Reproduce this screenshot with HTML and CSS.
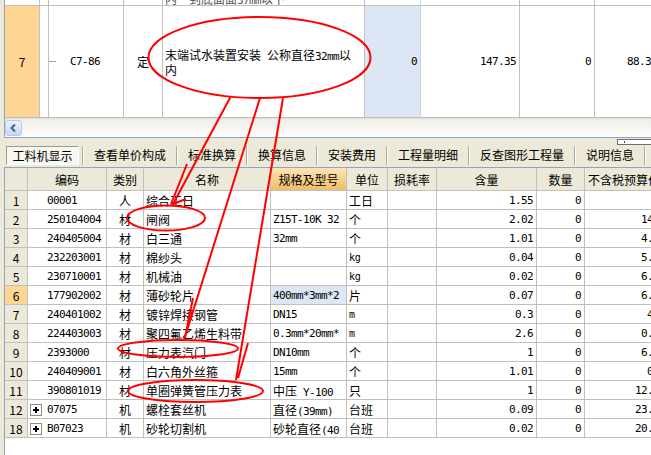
FILE: index.html
```html
<!DOCTYPE html>
<html lang="zh">
<head>
<meta charset="utf-8">
<title>工料机显示</title>
<link rel="stylesheet" href="styles.css">
</head>
<body>
<section class="upper">
  <div class="urow partial">
    <div class="uc"></div>
    <div class="uc"></div>
    <div class="uc"></div>
    <div class="uc"></div>
    <div class="uc name-cut"><span class="cut">内一到底面面<span class="n">37mm</span>以下</span></div>
    <div class="uc blue-edge"></div>
    <div class="uc"></div>
    <div class="uc"></div>
    <div class="uc"></div>
  </div>
  <div class="urow main">
    <div class="uc rh">7</div>
    <div class="uc"></div>
    <div class="uc code"><span class="tree"></span><span class="n">C7-86</span></div>
    <div class="uc c">定</div>
    <div class="uc uname"><span class="wrap">末端试水装置安装<span class="n">&nbsp;</span>公称直径<span class="n">32mm</span>以<br>内</span></div>
    <div class="uc r blue"><span class="n">0</span></div>
    <div class="uc r"><span class="n">147.35</span></div>
    <div class="uc r"><span class="n">0</span></div>
    <div class="uc r"><span class="n">88.35</span></div>
  </div>
  <div class="hscroll">
    <span class="sbtn"><svg width="15" height="14" viewBox="0 0 15 14"><path d="M9 3.5 L5.5 7 L9 10.5" fill="none" stroke="#4D6185" stroke-width="2"/></svg></span>
  </div>
</section>

<nav class="tabs">
  <span class="tab on">工料机显示</span>
  <span class="sep"></span>
  <span class="tab">查看单价构成</span>
  <span class="sep"></span>
  <span class="tab">标准换算</span>
  <span class="sep"></span>
  <span class="tab">换算信息</span>
  <span class="sep"></span>
  <span class="tab">安装费用</span>
  <span class="sep"></span>
  <span class="tab">工程量明细</span>
  <span class="sep"></span>
  <span class="tab">反查图形工程量</span>
  <span class="sep"></span>
  <span class="tab">说明信息</span>
  <span class="sep"></span>
  <span class="mini"><span class="dot"></span></span>
</nav>

<section class="lower">
  <div class="lrow head">
    <div class="lc"></div>
    <div class="lc c">编码</div>
    <div class="lc c">类别</div>
    <div class="lc c">名称</div>
    <div class="lc c hot">规格及型号</div>
    <div class="lc c">单位</div>
    <div class="lc c">损耗率</div>
    <div class="lc c">含量</div>
    <div class="lc c">数量</div>
    <div class="lc last-head">不含税预算价</div>
  </div>

  <div class="lrow">
    <div class="lc c rn">1</div>
    <div class="lc code"><span class="n">00001</span></div>
    <div class="lc c">人</div>
    <div class="lc">综合工日</div>
    <div class="lc"></div>
    <div class="lc">工日</div>
    <div class="lc"></div>
    <div class="lc r"><span class="n">1.55</span></div>
    <div class="lc r"><span class="n">0</span></div>
    <div class="lc r"></div>
  </div>
  <div class="lrow">
    <div class="lc c rn">2</div>
    <div class="lc code"><span class="n">250104004</span></div>
    <div class="lc c">材</div>
    <div class="lc">闸阀</div>
    <div class="lc"><span class="n">Z15T-10K 32</span></div>
    <div class="lc">个</div>
    <div class="lc"></div>
    <div class="lc r"><span class="n">2.02</span></div>
    <div class="lc r"><span class="n">0</span></div>
    <div class="lc r"><span class="n">14.6</span></div>
  </div>
  <div class="lrow">
    <div class="lc c rn">3</div>
    <div class="lc code"><span class="n">240405004</span></div>
    <div class="lc c">材</div>
    <div class="lc">白三通</div>
    <div class="lc"><span class="n">32mm</span></div>
    <div class="lc">个</div>
    <div class="lc"></div>
    <div class="lc r"><span class="n">1.01</span></div>
    <div class="lc r"><span class="n">0</span></div>
    <div class="lc r"><span class="n">4.51</span></div>
  </div>
  <div class="lrow">
    <div class="lc c rn">4</div>
    <div class="lc code"><span class="n">232203001</span></div>
    <div class="lc c">材</div>
    <div class="lc">棉纱头</div>
    <div class="lc"></div>
    <div class="lc"><span class="n unit">kg</span></div>
    <div class="lc"></div>
    <div class="lc r"><span class="n">0.04</span></div>
    <div class="lc r"><span class="n">0</span></div>
    <div class="lc r"><span class="n">5.24</span></div>
  </div>
  <div class="lrow">
    <div class="lc c rn">5</div>
    <div class="lc code"><span class="n">230710001</span></div>
    <div class="lc c">材</div>
    <div class="lc">机械油</div>
    <div class="lc"></div>
    <div class="lc"><span class="n unit">kg</span></div>
    <div class="lc"></div>
    <div class="lc r"><span class="n">0.02</span></div>
    <div class="lc r"><span class="n">0</span></div>
    <div class="lc r"><span class="n">6.83</span></div>
  </div>
  <div class="lrow">
    <div class="lc c rn sel">6</div>
    <div class="lc code"><span class="n">177902002</span></div>
    <div class="lc c">材</div>
    <div class="lc">薄砂轮片</div>
    <div class="lc blue"><span class="n">400mm*3mm*2</span></div>
    <div class="lc">片</div>
    <div class="lc"></div>
    <div class="lc r"><span class="n">0.07</span></div>
    <div class="lc r"><span class="n">0</span></div>
    <div class="lc r"><span class="n">6.40</span></div>
  </div>
  <div class="lrow">
    <div class="lc c rn">7</div>
    <div class="lc code"><span class="n">240401002</span></div>
    <div class="lc c">材</div>
    <div class="lc">镀锌焊接钢管</div>
    <div class="lc"><span class="n">DN15</span></div>
    <div class="lc"><span class="n unit">m</span></div>
    <div class="lc"></div>
    <div class="lc r"><span class="n">0.3</span></div>
    <div class="lc r"><span class="n">0</span></div>
    <div class="lc r"><span class="n">4.5</span></div>
  </div>
  <div class="lrow">
    <div class="lc c rn">8</div>
    <div class="lc code"><span class="n">224403003</span></div>
    <div class="lc c">材</div>
    <div class="lc">聚四氟乙烯生料带</div>
    <div class="lc"><span class="n">0.3mm*20mm*</span></div>
    <div class="lc"><span class="n unit">m</span></div>
    <div class="lc"></div>
    <div class="lc r"><span class="n">2.6</span></div>
    <div class="lc r"><span class="n">0</span></div>
    <div class="lc r"><span class="n">0.42</span></div>
  </div>
  <div class="lrow">
    <div class="lc c rn">9</div>
    <div class="lc code"><span class="n">2393000</span></div>
    <div class="lc c">材</div>
    <div class="lc">压力表汽门</div>
    <div class="lc"><span class="n">DN10mm</span></div>
    <div class="lc">个</div>
    <div class="lc"></div>
    <div class="lc r"><span class="n">1</span></div>
    <div class="lc r"><span class="n">0</span></div>
    <div class="lc r"><span class="n">6.80</span></div>
  </div>
  <div class="lrow">
    <div class="lc c rn">10</div>
    <div class="lc code"><span class="n">240409001</span></div>
    <div class="lc c">材</div>
    <div class="lc">白六角外丝箍</div>
    <div class="lc"><span class="n">15mm</span></div>
    <div class="lc">个</div>
    <div class="lc"></div>
    <div class="lc r"><span class="n">1.01</span></div>
    <div class="lc r"><span class="n">0</span></div>
    <div class="lc r"><span class="n">0.8</span></div>
  </div>
  <div class="lrow">
    <div class="lc c rn">11</div>
    <div class="lc code"><span class="n">390801019</span></div>
    <div class="lc c">材</div>
    <div class="lc">单圈弹簧管压力表</div>
    <div class="lc"><span>中压<span class="n">&nbsp;Y-100</span></span></div>
    <div class="lc">只</div>
    <div class="lc"></div>
    <div class="lc r"><span class="n">1</span></div>
    <div class="lc r"><span class="n">0</span></div>
    <div class="lc r"><span class="n">12.50</span></div>
  </div>
  <div class="lrow">
    <div class="lc c rn">12</div>
    <div class="lc code tree-code"><span class="plus"></span><span class="n">07075</span></div>
    <div class="lc c">机</div>
    <div class="lc">螺栓套丝机</div>
    <div class="lc"><span>直径<span class="n">(39mm)</span></span></div>
    <div class="lc">台班</div>
    <div class="lc"></div>
    <div class="lc r"><span class="n">0.09</span></div>
    <div class="lc r"><span class="n">0</span></div>
    <div class="lc r"><span class="n">23.11</span></div>
  </div>
  <div class="lrow">
    <div class="lc c rn">18</div>
    <div class="lc code tree-code"><span class="plus"></span><span class="n">B07023</span></div>
    <div class="lc c">机</div>
    <div class="lc">砂轮切割机</div>
    <div class="lc"><span>砂轮直径<span class="n">(40</span></span></div>
    <div class="lc">台班</div>
    <div class="lc"></div>
    <div class="lc r"><span class="n">0.02</span></div>
    <div class="lc r"><span class="n">0</span></div>
    <div class="lc r"><span class="n">20.86</span></div>
  </div>
</section>

<svg class="notes" width="651" height="455" viewBox="0 0 651 455">
  <g fill="none" stroke="#FF0000" stroke-width="2">
    <ellipse cx="259.5" cy="57.5" rx="111" ry="40.5"/>
    <ellipse cx="166" cy="218" rx="39" ry="12.5"/>
    <ellipse cx="178" cy="348.5" rx="60" ry="8.5"/>
    <ellipse cx="195.5" cy="391" rx="67.5" ry="11"/>
    <path d="M231 96 L172 206 M187 164 L171 204 M173 204 L186 199"/>
    <path d="M260 98 L184 340 M193 298 L185 338"/>
    <path d="M283 98 L236 380 M248 343 L238 378"/>
  </g>
</svg>
</body>
</html>
```

FILE: styles.css
```css
* { box-sizing: border-box; }
html, body { margin: 0; padding: 0; }
body {
  width: 651px;
  height: 455px;
  overflow: hidden;
  position: relative;
  background: #ECE9D8;
  font-family: "Noto Sans CJK SC", "Noto Sans", sans-serif;
  font-size: 12px;
  color: #000;
}
.n {
  font-family: "DejaVu Sans Mono", "Noto Sans CJK SC", monospace;
  font-size: 11px;
  letter-spacing: -0.62px;
}
.unit { font-size: 10px; letter-spacing: -0.2px; }

/* upper pane */
.upper {
  margin-left: 4px;
  height: 138px;
  border-left: 1px solid #8FA3C3;
  border-bottom: 1px solid #8FA3C3;
  background: #fff;
  overflow: hidden;
}
.urow {
  display: grid;
  grid-template-columns: 35px 9px 75px 39px 202px 56px 99px 75px 66px;
}
.urow.partial { height: 6px; }
.urow.main { height: 112px; }
.uc {
  display: flex;
  align-items: center;
  overflow: hidden;
  white-space: nowrap;
  border-right: 1px solid #C0C0C0;
  border-bottom: 1px solid #C0C0C0;
  padding: 0 3px;
}
.uc.rh {
  background: #FED592;
  justify-content: center;
}
.uc.code { padding: 0; }
.tree {
  display: inline-block;
  width: 7px;
  height: 1px;
  background: #A0A0A0;
  margin-right: 14px;
}
.uc.uname {
  white-space: nowrap;
  padding: 1px 2px 0;
}
.wrap { display: block; line-height: 13px; }
.name-cut { align-items: flex-end; padding-left: 2px; }
.cut { line-height: 12px; margin-bottom: -2px; color: #555; }
.uc.blue { background: #DCE6F4; border-right-color: #C9D6EA; }
.uc.blue-edge { border-right-color: #C9D6EA; }
.c { justify-content: center; }
.r { justify-content: flex-end; padding-right: 3px; }

.hscroll {
  height: 19px;
  display: flex;
  align-items: center;
  background: linear-gradient(#EFEDE6, #FDFDFB);
  border-top: 1px solid #E2E0D6;
}
.sbtn {
  width: 17px;
  height: 16px;
  display: flex;
  align-items: center;
  justify-content: center;
  border: 1px solid #B9C9EE;
  border-radius: 3px;
  background: linear-gradient(#EEF3FE, #C8D7F7);
}

/* tabs */
.tabs {
  position: relative;
  height: 29px;
  padding: 8px 0 0 6px;
  display: flex;
  align-items: flex-start;
}
.tab {
  height: 19px;
  line-height: 18px;
  padding: 0 10px;
  white-space: nowrap;
}
.tab.on {
  width: 73px;
  padding: 0;
  text-align: center;
  margin-right: 3px;
  border: 1px solid;
  border-color: #9D9B8E #FFFFFF #FFFFFF #9D9B8E;
  background: #F7F6F1;
}
.sep {
  width: 2px;
  height: 19px;
  border-left: 1px solid #ACA899;
  border-right: 1px solid #FFFFFF;
}
.mini {
  position: absolute;
  left: 617px;
  top: 1px;
  width: 40px;
  height: 6px;
  border: 1px solid #6E6E6E;
  border-right: none;
  background: #FFFFFF;
}
.dot {
  position: absolute;
  left: 6px;
  top: 1px;
  width: 1px;
  height: 2px;
  background: #2A3CC8;
}

/* lower table */
.lower {
  margin-left: 4px;
  height: 288px;
  border-left: 1px solid #8FA3C3;
  border-top: 1px solid #8FA3C3;
  background: #fff;
  overflow: hidden;
}
.lrow {
  display: grid;
  grid-template-columns: 23px 79px 37px 127px 76px 41px 49px 100px 48px 84px;
  height: 19px;
}
.lrow.head {
  height: 23px;
  background: #ECE9D8;
}
.lc {
  display: flex;
  align-items: center;
  overflow: hidden;
  white-space: nowrap;
  padding: 1px 2px 0;
  border-right: 1px solid #C0C0C0;
  border-bottom: 1px solid #C0C0C0;
}
.lc.r { padding-right: 3px; }
.head .lc { padding-top: 0; }
.lc.last-head { padding-left: 3px; }
.lc.hot { background: linear-gradient(#FDE4B6, #F2BD67); }
.lc.rn { background: #ECE9D8; }
.lc.rn.sel { background: #FED592; }
.lc.code { padding-left: 19px; }
.lc.code.tree-code { padding-left: 2px; }
.lc.blue { background: #DCE6F4; }
.plus {
  position: relative;
  display: inline-block;
  width: 12px;
  height: 12px;
  margin-right: 5px;
  border: 1px solid #8C8C8C;
  background: #fff;
}
.plus::before, .plus::after {
  content: "";
  position: absolute;
  background: #000;
}
.plus::before { left: 2px; top: 4px; width: 6px; height: 2px; }
.plus::after { left: 4px; top: 2px; width: 2px; height: 6px; }

.notes {
  position: absolute;
  left: 0;
  top: 0;
  pointer-events: none;
}
```
